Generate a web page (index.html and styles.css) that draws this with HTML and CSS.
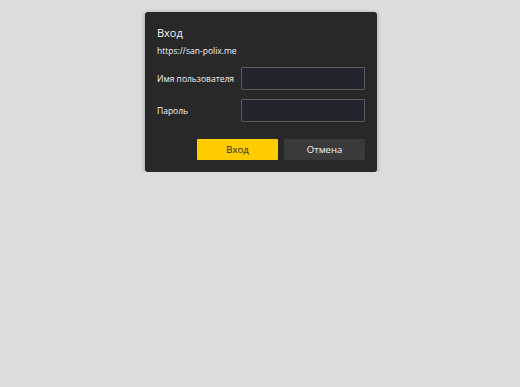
FILE: index.html
```html
<!DOCTYPE html>
<html lang="ru">
<head>
  <meta charset="UTF-8" />
  <title>Вход</title>
  <link rel="stylesheet" href="styles.css">
</head>
<body>
  <div class="dialog">
    <div class="title">Вход</div>
    <div class="origin">https://san-polix.me</div>
    <div class="fields">
      <label class="row">
        <span class="label">Имя пользователя</span>
        <input type="text" class="field" />
      </label>
      <label class="row">
        <span class="label">Пароль</span>
        <input type="password" class="field" />
      </label>
    </div>
    <div class="buttons">
      <button class="btn primary">Вход</button>
      <button class="btn">Отмена</button>
    </div>
  </div>
</body>
</html>
```
FILE: styles.css
```css
body {
  margin: 0;
  background: #dcdcdc;
  font-family: 'Open Sans', 'Noto Sans', sans-serif;
  color: #f4f4f4;
}
.dialog {
  width: 208px;
  margin: 12px 0 0 145px;
  padding: 12px 12px 12px 12px;
  background: #282828;
  border-radius: 3px;
  box-shadow: 0 1px 4px rgba(0, 0, 0, 0.35);
}
.title {
  font-size: 11px;
  line-height: 15px;
  margin-top: 1px;
}
.origin {
  font-size: 8.5px;
  line-height: 12px;
  margin-top: 5px;
}
.fields {
  display: flex;
  flex-direction: column;
  gap: 9px;
  margin-top: 10px;
}
.row {
  display: flex;
  align-items: center;
  justify-content: space-between;
}
.label {
  font-size: 8.5px;
}
.field {
  box-sizing: border-box;
  width: 124px;
  height: 23px;
  margin: 0;
  background: #22252e;
  border: 1px solid #5a5a5a;
  border-radius: 1px;
  outline: none;
}
.buttons {
  display: flex;
  justify-content: flex-end;
  gap: 6px;
  margin-top: 17px;
}
.btn {
  width: 81px;
  height: 21px;
  padding: 0;
  border: none;
  border-radius: 1px;
  background: #3a3a3a;
  color: #f4f4f4;
  font-family: 'Open Sans', 'Noto Sans', sans-serif;
  font-size: 9.5px;
}
.btn.primary {
  background: #ffcc00;
  color: #222;
}
```
